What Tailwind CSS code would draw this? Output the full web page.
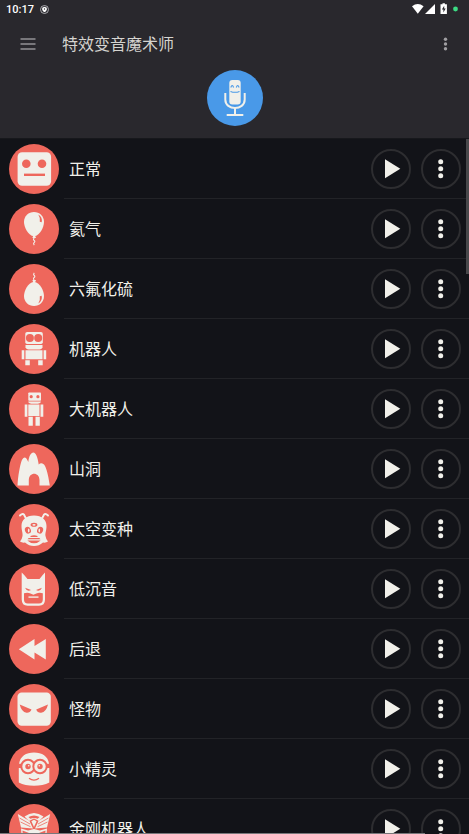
<!DOCTYPE html>
<html lang="zh-CN">
<head>
<meta charset="utf-8">
<meta name="viewport" content="width=device-width, initial-scale=1">
<title>特效变音魔术师</title>
<script src="https://cdn.jsdelivr.net/npm/@tailwindcss/browser@4"></script>
</head>
<body class="relative flex h-screen flex-col overflow-hidden bg-[#121318] font-['Noto_Sans_CJK_SC',sans-serif] text-[#f1f0ea]">

<header class="shrink-0 border-b border-[#17181c] bg-[#29282d] pb-3">
  <div class="flex h-5 items-center justify-between pl-1.5 pr-2.5">
    <div class="flex items-center gap-1.5">
      <span class="font-[Roboto,sans-serif] text-[11px] font-medium leading-5 text-white">10:17</span>
      <svg class="h-[11px] w-[9px]" viewBox="0 0 9 11" aria-hidden="true"><circle cx="4.500" cy="4.500" r="4" fill="none" stroke="#c9c9cb" stroke-width=".8"/><path d="M2.200 2.800 4.500 1.800 6.800 2.800V4.500Q6.500 6.500 4.500 7.300 2.500 6.500 2.200 4.500z" fill="#fff"/><circle cx="4.500" cy="4" r=".7" fill="#29282d"/></svg>
    </div>
    <svg class="h-5 w-12" viewBox="0 0 48 20" aria-hidden="true">
      <path d="M1 6.200Q6.800 1.800 12.600 6.200L6.800 13.800z" fill="#fff"/>
      <path d="M24 4v10H14z" fill="#fff"/>
      <path d="M31.500 3.300h2.400v1h2V14h-6.400V4.300h2z" fill="#fff"/>
      <path d="M33.200 5.700 30.900 9.600h1.500v3l2.300-4h-1.500z" fill="#29282d"/>
      <circle cx="44.500" cy="9" r="2.400" fill="#3ddc84"/>
    </svg>
  </div>
  <div class="flex h-[48px] items-center pl-3 pr-3">
    <button type="button" aria-label="菜单" class="grid size-8 place-items-center">
      <svg class="size-4" viewBox="0 0 16 16" aria-hidden="true"><path d="M.500 3H15.500M.500 8H15.500M.500 13H15.500" stroke="#929195" stroke-width="1.300"/></svg>
    </button>
    <h1 class="ml-[18px] flex-1 pb-0.5 text-base leading-6 text-[#d5d4d0]">特效变音魔术师</h1>
    <button type="button" aria-label="更多选项" class="grid h-8 w-6 place-items-center">
      <svg class="size-4" viewBox="0 0 16 16" fill="#a09fa2" aria-hidden="true"><circle cx="8.500" cy="3.200" r="1.700"/><circle cx="8.500" cy="8" r="1.700"/><circle cx="8.500" cy="12.800" r="1.700"/></svg>
    </button>
  </div>
  <button type="button" aria-label="录音" class="mx-auto mt-0.5 block size-14 rounded-full bg-[#4999e8]">
    <svg class="size-14" viewBox="0 0 56 56" fill="none" aria-hidden="true">
      <rect x="22.300" y="10" width="11.400" height="24.500" rx="3" fill="#f1f0ea"/>
      <path d="M23.800 17.500q1.400-4 2.800 0M29.300 17.500q1.400-4 2.800 0M23.500 21.400q4.500 1.800 9 0" stroke="#4999e8" stroke-width="1.100"/>
      <path d="M18.300 23v6.500c0 11.300 19.400 11.300 19.400 0V23" stroke="#f1f0ea" stroke-width="2"/>
      <path d="M28 37.500V45M19.700 45H36.300" stroke="#f1f0ea" stroke-width="2"/>
    </svg>
  </button>
</header>

<main class="min-h-0 flex-1 overflow-hidden">
  <ul id="effects"></ul>
</main>

<div class="absolute right-0 top-[139px] h-[135px] w-[3px] bg-[#48484b]"></div>
<div class="absolute bottom-0 left-0 right-11 h-px bg-[#77777a]"></div>

<script>
const R = '#ee675c';
const balloon = `<path d="M25 32.300C18.500 31.500 15 22.500 15 18 15 12 19.500 8 25 8S35 12 35 18C35 22.500 31.500 31.500 25 32.300z"/><path d="M29.300 10.600Q33.700 13.300 32.700 18.300L30.800 17.800Q31.500 14 29.300 10.600z" fill="${R}"/><path d="M24.300 31.500h1.800l.9 2.600h-3.600z"/><path d="M25.200 34q-1.400 1.500 0 2.500t-.2 2.200q-1 1 .3 2.500" fill="none" stroke="#f1f0ea" stroke-width="1.100"/>`;
const effects = [
  ['正常', `<rect x="8.600" y="8.200" width="33.500" height="33.500" rx="4.500"/><g fill="${R}"><circle cx="17.300" cy="19.700" r="4.300"/><circle cx="33" cy="19.700" r="4.300"/><path d="M15 29.600h21v2.400h-21z"/></g>`],
  ['氦气', balloon],
  ['六氟化硫', `<g transform="matrix(1 0 0 -1 0 50)">${balloon}</g>`],
  ['机器人', `<rect x="16.300" y="8" width="17.500" height="12" rx="1.800"/><circle cx="20.900" cy="14" r="4" fill="${R}"/><circle cx="29.200" cy="14" r="4" fill="${R}"/><path d="M16.500 21h17v2.500q-1 2-3 2H19.500q-2 0-3-2z"/><path d="M16.500 26.300h17v8.900h-17zM12.700 26.300h2.600v8.900h-2.600zM34.600 26.300h2.600v8.900h-2.600zM16.300 36.300h4.500v5h-4.500zM29.200 36.300h4.500v5h-4.500z"/>`],
  ['大机器人', `<rect x="19.300" y="8.500" width="12.700" height="8.200" rx=".8"/><circle cx="22.200" cy="12.700" r="1.600" fill="${R}"/><circle cx="28.900" cy="12.700" r="1.600" fill="${R}"/><path d="M19.300 17.500h12.500v.8q-1 1.400-3 1.400h-6.500q-2 0-3-1.400zM19.300 20.500h11.200v11.500h-11.200zM15.700 20.500h2.700v12.200h-2.700zM31.500 20.500h2.800v12.200h-2.800zM19.500 32.800h4.300v9h-4.300zM26.500 32.800h4.300v9h-4.300z"/>`],
  ['山洞', `<path d="M8.500 41.500C9 32 11 21 12.700 16.500 14.500 12.500 17 12.500 18.300 16L19.300 18C20 12 22 8.500 24.300 8.500 27 8.500 28.800 13.500 29.700 20.500 31.500 18.300 34.500 18.700 36 22 38.500 27 39.800 35 40.800 41.500H30.500V36C30.500 27.500 19.800 27.500 19.800 36V41.500z"/>`],
  ['太空变种', `<path d="M11 11.500q3.500-3.500 5 1.200l1.800 3M39 11.500q-3.500-3.500-5 1.200l-1.800 3" fill="none" stroke="#f1f0ea" stroke-width="2" stroke-linecap="round"/><path d="M25 11.500C33 11.500 37.500 16 37.500 22 37.500 27 36 29 36.500 32Q37 35.500 39 37.500 37 39 34 38.500 30 42 25 42T16 38.500Q13 39 11 37.500 13 35.500 13.500 32C14 29 12.500 27 12.500 22 12.500 16 17 11.500 25 11.500z"/><g fill="${R}"><ellipse cx="25" cy="20.800" rx="3.400" ry="2"/><ellipse cx="18.900" cy="26.200" rx="2.900" ry="3.500" transform="rotate(-25 18.900 26.200)"/><ellipse cx="31.100" cy="26.200" rx="2.900" ry="3.500" transform="rotate(25 31.100 26.200)"/><path d="M21.500 32q3.500-1.500 7 0v.9h-7zM19.700 34h10.600l1.200 1.300h-13zM18.300 36.400h13.400q-3 2.800-6.700 2.800t-6.700-2.800z"/></g><ellipse cx="25" cy="20.800" rx="1.600" ry=".9"/><ellipse cx="19.700" cy="26.500" rx=".8" ry="1.900"/><ellipse cx="30.300" cy="26.500" rx=".8" ry="1.900"/>`],
  ['低沉音', `<path d="M12.700 8.500Q15.500 11 18.500 15H30.500Q33.500 11 36 8.500V35.500Q36 41.700 30 41.700H18.700Q12.700 41.700 12.700 35.500z"/><path d="M16 23.700l6 2.300q-4 2-6-2.300zM33 23.700l-6 2.300q4 2 6-2.300z" fill="${R}"/><path d="M15 29.200Q19 28 21.500 29.600L24.400 30.800 27.300 29.600Q30 28 33.800 29.200V35.500Q33.800 39.400 30 39.400H18.800Q15 39.400 15 35.500z" fill="${R}"/><path d="M19.500 32.400h10v1.400h-10z"/>`],
  ['后退', `<path d="M9.800 25.200 25.500 15V22L36.800 15V35.500L25.500 28.500V35.500z"/>`],
  ['怪物', `<rect x="8.500" y="8.500" width="33.300" height="33.300" rx="4.200"/><path d="M10.700 20.500 22.500 25.500Q21 29 17.500 28.700 12.500 28 10.700 20.500zM39 20.500 27.200 25.500Q28.700 29 32.200 28.700 37.200 28 39 20.500z" fill="${R}"/>`],
  ['小精灵', `<path d="M9.800 38.500V23C9.800 13 16 8.500 25 8.500S40.300 13 40.300 23V38.500Q34 41.700 25 41.700T9.800 38.500z"/><path d="M8.800 19.800H13V24H8.800zM37 19.800h4.500V24H37z" fill="${R}"/><circle cx="19" cy="22.500" r="6.700" fill="#f1f0ea" stroke="${R}" stroke-width="2"/><circle cx="31" cy="22.500" r="6.700" fill="#f1f0ea" stroke="${R}" stroke-width="2"/><circle cx="19" cy="22.500" r="2.700" fill="${R}"/><circle cx="31" cy="22.500" r="2.700" fill="${R}"/><circle cx="19.700" cy="21.800" r=".8"/><circle cx="30.300" cy="21.800" r=".8"/><path d="M20 34.300Q25 38 30 34.300" fill="none" stroke="${R}" stroke-width="1.300"/>`],
  ['金刚机器人', `<path d="M15.500 12.500Q25 5.500 34.500 12.500L30 17 25 14.500 20 17z"/><path d="M19.500 13q5.500-3 11 0l-1.800 1.800q-3.700-1.600-7.400 0z" fill="${R}"/><path d="M8.800 10 20.500 17 24 24.500 12 23.500zM41.200 10 29.500 17 26 24.500 38 23.500z"/><path d="M10.500 14 21 20M11.500 18 21.500 22.700M39.500 14 29 20M38.500 18 28.500 22.700" stroke="${R}" stroke-width=".8"/><path d="M25 15.800l2.600 1.400L25 23 22.400 17.200z"/><path d="M12 24.500l7 2 6-1.500 6 1.500 7-2-1 11L31 41.700H19L13 35.500z"/><path d="M13.500 26.500l6.500 2.400v1.600l-6.500-1.800zM36.500 26.500l-6.500 2.400v1.600l6.500-1.800z" fill="${R}"/>`]
];

document.getElementById('effects').innerHTML = effects.map(([name, art]) => `
<li class="flex h-[60px] items-stretch pl-[9px]">
  <svg class="mt-[5px] size-[50px] shrink-0" viewBox="0 0 50 50" fill="#f1f0ea" aria-hidden="true"><circle cx="25" cy="25" r="25" fill="${R}"/>${art}</svg>
  <div class="ml-[5px] flex flex-1 items-center gap-2.5 border-b border-[#222327] pl-[5px] pr-2">
    <span class="flex-1 pb-0.5 text-base leading-6">${name}</span>
    <button type="button" aria-label="播放 ${name}" class="size-10 rounded-full border-2 border-[#2d2d30]">
      <svg class="size-9" viewBox="2 2 36 36" fill="#f1f0ea" aria-hidden="true"><path d="M14 10.300 29.300 19.700 14 29.200z"/></svg>
    </button>
    <button type="button" aria-label="更多 ${name}" class="size-10 rounded-full border-2 border-[#2d2d30]">
      <svg class="size-9" viewBox="2 2 36 36" fill="#f1f0ea" aria-hidden="true"><circle cx="19.700" cy="12.700" r="2.500"/><circle cx="19.700" cy="19.700" r="2.500"/><circle cx="19.700" cy="26.700" r="2.500"/></svg>
    </button>
  </div>
</li>`).join('');
</script>
</body>
</html>
